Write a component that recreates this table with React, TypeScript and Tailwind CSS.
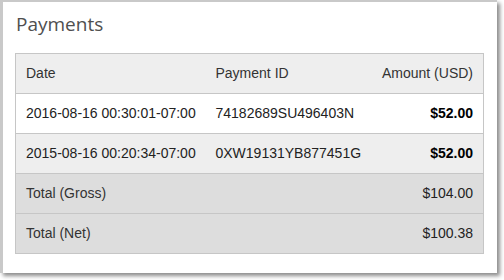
import React from "react";

type Payment = { date: string; id: string; amount: string };

const payments: Payment[] = [
  { date: "2016-08-16 00:30:01-07:00", id: "74182689SU496403N", amount: "$52.00" },
  { date: "2015-08-16 00:20:34-07:00", id: "0XW19131YB877451G", amount: "$52.00" },
];

const totals = [
  { label: "Total (Gross)", amount: "$104.00" },
  { label: "Total (Net)", amount: "$100.38" },
];

export default function App() {
  return (
    <div className="w-[504px] h-[280px] bg-white overflow-hidden">
      <div className="w-[497px] h-[273px] bg-white border-l-[3px] border-t-2 border-[#c9c9c9] shadow-[3px_3px_4px_rgba(0,0,0,0.45)] px-3">
        <h2 className="pl-px pt-[9px] h-[51px] text-[19px] leading-[26px] text-[#4f4f4f] font-['Open_Sans',sans-serif]">
          Payments
        </h2>
        <table className="w-[469px] border-collapse text-[14px] text-[#222] font-['Liberation_Sans',Arial,sans-serif]">
          <thead>
            <tr className="h-10 bg-[#eeeeee] text-[#333]">
              <th className="w-[190px] border-y border-l border-[#c6c6c6] pl-[10px] text-left font-normal">Date</th>
              <th className="border-y border-[#c6c6c6] pl-[10px] text-left font-normal">Payment ID</th>
              <th className="border-y border-r border-[#c6c6c6] pr-[10px] text-right font-normal">Amount (USD)</th>
            </tr>
          </thead>
          <tbody>
            {payments.map((p, i) => (
              <tr key={p.id} className={i % 2 === 0 ? "h-10 bg-white" : "h-10 bg-[#eeeeee]"}>
                <td className="border-y border-l border-[#c6c6c6] pl-[10px]">{p.date}</td>
                <td className="border-y border-[#c6c6c6] pl-[10px]">{p.id}</td>
                <td className="border-y border-r border-[#c6c6c6] pr-[10px] text-right font-bold text-black">{p.amount}</td>
              </tr>
            ))}
            {totals.map((t) => (
              <tr key={t.label} className="h-10 bg-[#dddddd] text-[#333]">
                <td className="border-y border-l border-[#c6c6c6] pl-[10px]">{t.label}</td>
                <td className="border-y border-[#c6c6c6]"></td>
                <td className="border-y border-r border-[#c6c6c6] pr-[10px] text-right text-[#222]">{t.amount}</td>
              </tr>
            ))}
          </tbody>
        </table>
      </div>
    </div>
  );
}
